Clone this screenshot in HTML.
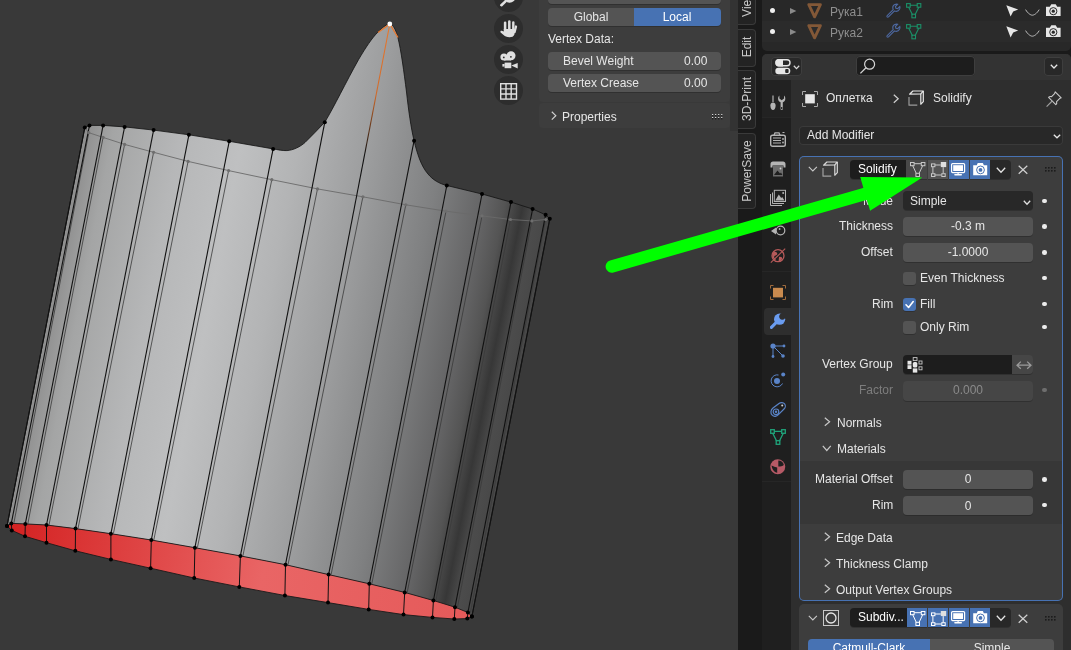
<!DOCTYPE html>
<html><head><meta charset="utf-8">
<style>
html,body{margin:0;padding:0;width:1071px;height:650px;overflow:hidden;background:#393939;position:relative}
.t{position:absolute;font-family:"Liberation Sans",sans-serif;font-size:12px;line-height:12px;white-space:nowrap;will-change:transform}
svg{overflow:visible}
</style></head><body>
<div style="position:absolute;left:0px;top:0px;width:738px;height:650px;background:#393939;border-radius:0px;"></div>
<svg style="position:absolute;left:0;top:0" width="738" height="650" viewBox="0 0 738 650">
<defs>
<linearGradient id="body" gradientUnits="userSpaceOnUse" x1="31.6" y1="400" x2="496.7" y2="491.2"><stop offset="0" stop-color="#8e8e8e"/><stop offset="0.06" stop-color="#a4a5a5"/><stop offset="0.2" stop-color="#b6b7b8"/><stop offset="0.33" stop-color="#bfc0c1"/><stop offset="0.45" stop-color="#b3b4b5"/><stop offset="0.6" stop-color="#9c9d9e"/><stop offset="0.75" stop-color="#7f8081"/><stop offset="0.86" stop-color="#636364"/><stop offset="0.9" stop-color="#545454"/><stop offset="0.938" stop-color="#373737"/><stop offset="0.965" stop-color="#4c4c4c"/><stop offset="1" stop-color="#474747"/></linearGradient>
<linearGradient id="red" gradientUnits="userSpaceOnUse" x1="10" y1="530" x2="470" y2="610"><stop offset="0" stop-color="#d42222"/><stop offset="0.55" stop-color="#e96565"/><stop offset="1" stop-color="#e55a5a"/></linearGradient>
<linearGradient id="sel" gradientUnits="userSpaceOnUse" x1="389.8" y1="24" x2="285.5" y2="564.7"><stop offset="0" stop-color="#e8782e"/><stop offset="0.13" stop-color="#d06a2a"/><stop offset="0.24" stop-color="#111"/></linearGradient>
</defs>
<path d="M84.8,127.5 L89.5,125.4 L103.1,125.4 L124.6,126.9 L153.6,130.1 L188.9,134.8 L229.2,141.3 L273.1,148.9 C278,149.8 283,150.8 287,150.6 C293,150.2 300,147 305,142.5 C312,136 318,129 324.8,122.2 C334,107 346,82 358.5,59.7 C366,47 372,38 378,32 C383,27 387,24 389.8,24 C393,24 396,30 398,38 C401,50 404,72 406.5,92 C408.5,110 411,128 414.1,140.7 C417,153 421,166 428,174 C433,180 439,183.5 446.8,185.5 L482,194 L511,202.1 L532.6,209 L545.6,214.8 L549.8,218.7 L471.9,616.5 L467.9,612.5 L455.0,607.2 L433.4,600.5 L404.7,592.4 L369.3,583.8 L328.6,574.6 L285.5,564.7 L240.4,555.9 L194.9,547.7 L151.3,540.0 L110.9,533.7 L75.5,528.6 L46.5,525.0 L25.3,523.9 L11.3,523.4 L7.0,526.1 Z" fill="url(#body)"/>
<polygon points="7.0,526.1 11.3,523.4 25.3,523.9 46.5,525.0 75.5,528.6 110.9,533.7 151.3,540.0 194.9,547.7 240.4,555.9 285.5,564.7 328.6,574.6 369.3,583.8 404.7,592.4 433.4,600.5 455.0,607.2 467.9,612.5 471.9,616.5 471.9,616.5 467.3,618.6 454.3,619.0 432.5,617.4 403.5,614.6 368.7,609.4 328.0,602.6 284.9,595.5 239.3,586.9 194.2,578.0 150.6,568.2 110.9,559.4 75.3,550.8 46.5,542.7 25.0,536.3 11.8,530.4 7.0,526.1" fill="url(#red)" stroke="#1a1a1a" stroke-width="0.9"/>
<polyline points="84.8,127.5 88.8,132.7 103.1,137.4 124.6,144.4 153.6,152.3 188.1,161.4 228.6,170.6 271.8,179.7 317.5,188.9 362.9,196.8 405.8,204.8 446.0,211.2 482.0,215.9 510.5,219.5 531.8,220.9 545.6,219.5 549.8,218.7" fill="none" stroke="#6a6a6a" stroke-width="0.9"/>
<line x1="88.8" y1="132.7" x2="13.8" y2="523.4" stroke="#3a3a3a" stroke-width="0.8"/>
<line x1="103.1" y1="137.4" x2="27.8" y2="523.9" stroke="#3a3a3a" stroke-width="0.8"/>
<line x1="124.6" y1="144.4" x2="49.0" y2="525" stroke="#3a3a3a" stroke-width="0.8"/>
<line x1="153.6" y1="152.3" x2="78.0" y2="528.6" stroke="#3a3a3a" stroke-width="0.8"/>
<line x1="188.1" y1="161.4" x2="113.4" y2="533.7" stroke="#3a3a3a" stroke-width="0.8"/>
<line x1="228.6" y1="170.6" x2="153.8" y2="540" stroke="#3a3a3a" stroke-width="0.8"/>
<line x1="271.8" y1="179.7" x2="197.4" y2="547.7" stroke="#3a3a3a" stroke-width="0.8"/>
<line x1="317.5" y1="188.9" x2="242.9" y2="555.9" stroke="#3a3a3a" stroke-width="0.8"/>
<line x1="362.9" y1="196.8" x2="288.0" y2="564.7" stroke="#3a3a3a" stroke-width="0.8"/>
<line x1="405.8" y1="204.8" x2="331.1" y2="574.6" stroke="#3a3a3a" stroke-width="0.8"/>
<line x1="446" y1="211.2" x2="371.8" y2="583.8" stroke="#3a3a3a" stroke-width="0.8"/>
<line x1="482" y1="215.9" x2="407.2" y2="592.4" stroke="#3a3a3a" stroke-width="0.8"/>
<line x1="510.5" y1="219.5" x2="435.9" y2="600.5" stroke="#3a3a3a" stroke-width="0.8"/>
<line x1="531.8" y1="220.9" x2="457.5" y2="607.2" stroke="#3a3a3a" stroke-width="0.8"/>
<line x1="545.6" y1="219.5" x2="470.4" y2="612.5" stroke="#3a3a3a" stroke-width="0.8"/>
<line x1="84.8" y1="127.5" x2="7" y2="526.1" stroke="#111" stroke-width="1.1"/>
<line x1="89.5" y1="125.4" x2="11.3" y2="523.4" stroke="#111" stroke-width="1.1"/>
<line x1="103.1" y1="125.4" x2="25.3" y2="523.9" stroke="#111" stroke-width="1.1"/>
<line x1="124.6" y1="126.9" x2="46.5" y2="525" stroke="#111" stroke-width="1.1"/>
<line x1="153.6" y1="130.1" x2="75.5" y2="528.6" stroke="#111" stroke-width="1.1"/>
<line x1="188.9" y1="134.8" x2="110.9" y2="533.7" stroke="#111" stroke-width="1.1"/>
<line x1="229.2" y1="141.3" x2="151.3" y2="540" stroke="#111" stroke-width="1.1"/>
<line x1="273.1" y1="148.9" x2="194.9" y2="547.7" stroke="#111" stroke-width="1.1"/>
<line x1="324.8" y1="122.2" x2="240.4" y2="555.9" stroke="#111" stroke-width="1.1"/>
<line x1="389.8" y1="24" x2="285.5" y2="564.7" stroke="url(#sel)" stroke-width="1.1"/>
<line x1="414.1" y1="140.7" x2="328.6" y2="574.6" stroke="#111" stroke-width="1.1"/>
<line x1="446.8" y1="185.5" x2="369.3" y2="583.8" stroke="#111" stroke-width="1.1"/>
<line x1="482" y1="194" x2="404.7" y2="592.4" stroke="#111" stroke-width="1.1"/>
<line x1="511" y1="202.1" x2="433.4" y2="600.5" stroke="#111" stroke-width="1.1"/>
<line x1="532.6" y1="209" x2="455" y2="607.2" stroke="#111" stroke-width="1.1"/>
<line x1="545.6" y1="214.8" x2="467.9" y2="612.5" stroke="#111" stroke-width="1.1"/>
<line x1="549.8" y1="218.7" x2="471.9" y2="616.5" stroke="#111" stroke-width="1.1"/>
<line x1="11.3" y1="523.4" x2="11.8" y2="530.4" stroke="#111" stroke-width="1"/>
<line x1="25.3" y1="523.9" x2="25" y2="536.3" stroke="#111" stroke-width="1"/>
<line x1="46.5" y1="525" x2="46.5" y2="542.7" stroke="#111" stroke-width="1"/>
<line x1="75.5" y1="528.6" x2="75.3" y2="550.8" stroke="#111" stroke-width="1"/>
<line x1="110.9" y1="533.7" x2="110.9" y2="559.4" stroke="#111" stroke-width="1"/>
<line x1="151.3" y1="540" x2="150.6" y2="568.2" stroke="#111" stroke-width="1"/>
<line x1="194.9" y1="547.7" x2="194.2" y2="578" stroke="#111" stroke-width="1"/>
<line x1="240.4" y1="555.9" x2="239.3" y2="586.9" stroke="#111" stroke-width="1"/>
<line x1="285.5" y1="564.7" x2="284.9" y2="595.5" stroke="#111" stroke-width="1"/>
<line x1="328.6" y1="574.6" x2="328" y2="602.6" stroke="#111" stroke-width="1"/>
<line x1="369.3" y1="583.8" x2="368.7" y2="609.4" stroke="#111" stroke-width="1"/>
<line x1="404.7" y1="592.4" x2="403.5" y2="614.6" stroke="#111" stroke-width="1"/>
<line x1="433.4" y1="600.5" x2="432.5" y2="617.4" stroke="#111" stroke-width="1"/>
<line x1="455" y1="607.2" x2="454.3" y2="619" stroke="#111" stroke-width="1"/>
<line x1="467.9" y1="612.5" x2="467.3" y2="618.6" stroke="#111" stroke-width="1"/>
<path d="M84.8,127.5 L89.5,125.4 L103.1,125.4 L124.6,126.9 L153.6,130.1 L188.9,134.8 L229.2,141.3 L273.1,148.9 C278,149.8 283,150.8 287,150.6 C293,150.2 300,147 305,142.5 C312,136 318,129 324.8,122.2 C334,107 346,82 358.5,59.7 C366,47 372,38 378,32 C383,27 387,24 389.8,24 C393,24 396,30 398,38 C401,50 404,72 406.5,92 C408.5,110 411,128 414.1,140.7 C417,153 421,166 428,174 C433,180 439,183.5 446.8,185.5 L482,194 L511,202.1 L532.6,209 L545.6,214.8 L549.8,218.7 L471.9,616.5 " fill="none" stroke="#111" stroke-width="0.8"/>
<path d="M84.8,127.5 L7,526.1" stroke="#111" stroke-width="1" fill="none"/>
<circle cx="84.8" cy="127.5" r="2" fill="#000"/>
<circle cx="89.5" cy="125.4" r="2" fill="#000"/>
<circle cx="103.1" cy="125.4" r="2" fill="#000"/>
<circle cx="124.6" cy="126.9" r="2" fill="#000"/>
<circle cx="153.6" cy="130.1" r="2" fill="#000"/>
<circle cx="188.9" cy="134.8" r="2" fill="#000"/>
<circle cx="229.2" cy="141.3" r="2" fill="#000"/>
<circle cx="273.1" cy="148.9" r="2" fill="#000"/>
<circle cx="324.8" cy="122.2" r="2" fill="#000"/>
<circle cx="414.1" cy="140.7" r="2" fill="#000"/>
<circle cx="446.8" cy="185.5" r="2" fill="#000"/>
<circle cx="482" cy="194" r="2" fill="#000"/>
<circle cx="511" cy="202.1" r="2" fill="#000"/>
<circle cx="532.6" cy="209" r="2" fill="#000"/>
<circle cx="545.6" cy="214.8" r="2" fill="#000"/>
<circle cx="549.8" cy="218.7" r="2" fill="#000"/>
<circle cx="7" cy="526.1" r="2" fill="#000"/>
<circle cx="11.3" cy="523.4" r="2" fill="#000"/>
<circle cx="25.3" cy="523.9" r="2" fill="#000"/>
<circle cx="46.5" cy="525" r="2" fill="#000"/>
<circle cx="75.5" cy="528.6" r="2" fill="#000"/>
<circle cx="110.9" cy="533.7" r="2" fill="#000"/>
<circle cx="151.3" cy="540" r="2" fill="#000"/>
<circle cx="194.9" cy="547.7" r="2" fill="#000"/>
<circle cx="240.4" cy="555.9" r="2" fill="#000"/>
<circle cx="285.5" cy="564.7" r="2" fill="#000"/>
<circle cx="328.6" cy="574.6" r="2" fill="#000"/>
<circle cx="369.3" cy="583.8" r="2" fill="#000"/>
<circle cx="404.7" cy="592.4" r="2" fill="#000"/>
<circle cx="433.4" cy="600.5" r="2" fill="#000"/>
<circle cx="455" cy="607.2" r="2" fill="#000"/>
<circle cx="467.9" cy="612.5" r="2" fill="#000"/>
<circle cx="471.9" cy="616.5" r="2" fill="#000"/>
<circle cx="7" cy="526.1" r="2" fill="#000"/>
<circle cx="11.8" cy="530.4" r="2" fill="#000"/>
<circle cx="25" cy="536.3" r="2" fill="#000"/>
<circle cx="46.5" cy="542.7" r="2" fill="#000"/>
<circle cx="75.3" cy="550.8" r="2" fill="#000"/>
<circle cx="110.9" cy="559.4" r="2" fill="#000"/>
<circle cx="150.6" cy="568.2" r="2" fill="#000"/>
<circle cx="194.2" cy="578" r="2" fill="#000"/>
<circle cx="239.3" cy="586.9" r="2" fill="#000"/>
<circle cx="284.9" cy="595.5" r="2" fill="#000"/>
<circle cx="328" cy="602.6" r="2" fill="#000"/>
<circle cx="368.7" cy="609.4" r="2" fill="#000"/>
<circle cx="403.5" cy="614.6" r="2" fill="#000"/>
<circle cx="432.5" cy="617.4" r="2" fill="#000"/>
<circle cx="454.3" cy="619" r="2" fill="#000"/>
<circle cx="467.3" cy="618.6" r="2" fill="#000"/>
<circle cx="471.9" cy="616.5" r="2" fill="#000"/>
<circle cx="88.8" cy="132.7" r="1.6" fill="#6e6e6e"/>
<circle cx="103.1" cy="137.4" r="1.6" fill="#6e6e6e"/>
<circle cx="124.6" cy="144.4" r="1.6" fill="#6e6e6e"/>
<circle cx="153.6" cy="152.3" r="1.6" fill="#6e6e6e"/>
<circle cx="188.1" cy="161.4" r="1.6" fill="#6e6e6e"/>
<circle cx="228.6" cy="170.6" r="1.6" fill="#6e6e6e"/>
<circle cx="271.8" cy="179.7" r="1.6" fill="#6e6e6e"/>
<circle cx="317.5" cy="188.9" r="1.6" fill="#6e6e6e"/>
<circle cx="362.9" cy="196.8" r="1.6" fill="#6e6e6e"/>
<circle cx="405.8" cy="204.8" r="1.6" fill="#6e6e6e"/>
<circle cx="446" cy="211.2" r="1.6" fill="#6e6e6e"/>
<circle cx="482" cy="215.9" r="1.6" fill="#6e6e6e"/>
<circle cx="510.5" cy="219.5" r="1.6" fill="#6e6e6e"/>
<circle cx="531.8" cy="220.9" r="1.6" fill="#6e6e6e"/>
<circle cx="545.6" cy="219.5" r="1.6" fill="#6e6e6e"/>
<path d="M378,32.5 L389.8,24 L398,37.5" fill="none" stroke="#e8782e" stroke-width="1.3"/>
<circle cx="389.8" cy="24" r="2.4" fill="#ffffff"/>
</svg><div style="position:absolute;left:493.5px;top:-17.2px;width:29px;height:29px;border-radius:50%;background:#2d2d2d"></div>
<div style="position:absolute;left:493.5px;top:14.0px;width:29px;height:29px;border-radius:50%;background:#2d2d2d"></div>
<div style="position:absolute;left:493.5px;top:45.2px;width:29px;height:29px;border-radius:50%;background:#2d2d2d"></div>
<div style="position:absolute;left:493.5px;top:76.4px;width:29px;height:29px;border-radius:50%;background:#2d2d2d"></div>
<svg style="position:absolute;left:496px;top:-12px;" width="24" height="20" viewBox="0 0 24 20"><circle cx="13.5" cy="8.6" r="6.2" fill="#e0e0e0"/><path d="M9.2 13.6 L5.4 17.2" stroke="#e0e0e0" stroke-width="2.6" stroke-linecap="round"/></svg>
<svg style="position:absolute;left:490px;top:15px;" width="36" height="30" viewBox="0 0 36 30"><g stroke="#e0e0e0" stroke-linecap="round" fill="none"><path d="M15.1 7.8 V15" stroke-width="2.5"/><path d="M19.3 6.4 V15" stroke-width="2.5"/><path d="M23.3 7.4 V15.5" stroke-width="2.4"/><path d="M26 11.5 L24.6 17" stroke-width="2.3"/></g><path d="M13.8 14 H25.2 L24.4 19.5 C23.6 21.6 21.8 22.2 19.6 22.2 C16.6 22.2 15 21.6 13 19.6 L10.6 17.4 C10 16.8 10.6 15.6 11.6 15.8 L13.8 16.6 Z" fill="#e0e0e0"/></svg>
<svg style="position:absolute;left:499.5px;top:50.5px;" width="18" height="18" viewBox="0 0 18 18"><circle cx="4" cy="6" r="3.6" fill="#e0e0e0"/><circle cx="11" cy="4.8" r="4.5" fill="#e0e0e0"/><rect x="4" y="5.5" width="7" height="4" fill="#e0e0e0"/><circle cx="3.8" cy="6.4" r="0.9" fill="#2f2f2f"/><circle cx="10.9" cy="5.8" r="0.9" fill="#2f2f2f"/><rect x="4.6" y="11.6" width="6.7" height="5.6" fill="#e0e0e0"/><rect x="2.4" y="13" width="2.2" height="2.6" fill="#e0e0e0"/><path d="M11.3 14.5 L17.7 12.1 V17.4 Z" fill="#e0e0e0"/></svg>
<svg style="position:absolute;left:499.6px;top:83.2px;" width="17.2" height="16.8" viewBox="0 0 17.2 16.8"><g fill="none" stroke="#e0e0e0" stroke-width="1.4"><rect x="0.7" y="0.7" width="15.8" height="15.4"/><path d="M6 0.7 V16.1 M11.2 0.7 V16.1 M0.7 5.9 H16.5 M0.7 11 H16.5"/></g></svg>
<div style="position:absolute;left:730px;top:0px;width:8px;height:131px;background:#333333;border-radius:0px;"></div>
<div style="position:absolute;left:539px;top:-10px;width:191px;height:111.5px;background:#3d3d3d;border-radius:4px;"></div>
<div style="position:absolute;left:548px;top:-10px;width:173px;height:13.8px;background:#545454;border-radius:4px;box-shadow:0 1px 0 rgba(0,0,0,0.2);"></div>
<div style="position:absolute;left:548px;top:8px;width:85.5px;height:18px;background:#545454;border-radius:4px 0 0 4px;box-shadow:0 1px 0 rgba(0,0,0,0.2);"></div>
<div style="position:absolute;left:633.5px;top:8px;width:87.5px;height:18px;background:#4772b3;border-radius:0 4px 4px 0;box-shadow:0 1px 0 rgba(0,0,0,0.2);"></div>
<div class="t" style="left:440.5px;width:300px;top:10.84px;color:#e6e6e6;font-size:12px;text-align:center;">Global</div>
<div class="t" style="left:527px;width:300px;top:10.84px;color:#ffffff;font-size:12px;text-align:center;">Local</div>
<div class="t" style="left:548px;top:32.84px;color:#e6e6e6;font-size:12px;">Vertex Data:</div>
<div style="position:absolute;left:548px;top:52.4px;width:173px;height:17.8px;background:#545454;border-radius:4px;box-shadow:0 1px 0 rgba(0,0,0,0.2);"></div>
<div class="t" style="left:563px;top:54.84px;color:#e6e6e6;font-size:12px;">Bevel Weight</div>
<div class="t" style="right:364px;top:54.84px;color:#e6e6e6;font-size:12px;text-align:right;">0.00</div>
<div style="position:absolute;left:548px;top:74.4px;width:173px;height:18px;background:#545454;border-radius:4px;box-shadow:0 1px 0 rgba(0,0,0,0.2);"></div>
<div class="t" style="left:563px;top:76.84px;color:#e6e6e6;font-size:12px;">Vertex Crease</div>
<div class="t" style="right:364px;top:76.84px;color:#e6e6e6;font-size:12px;text-align:right;">0.00</div>
<div style="position:absolute;left:539px;top:102.6px;width:191px;height:25.6px;background:#3d3d3d;border-radius:4px;"></div>
<svg style="position:absolute;left:550.5px;top:111.3px;" width="5.6" height="9.4" viewBox="0 0 5.6 9.4"><path d="M0.8 0.8 L4.8 4.7 L0.8 8.6" fill="none" stroke="#d0d0d0" stroke-width="1.2"/></svg>
<svg style="position:absolute;left:711.8px;top:114px;" width="12" height="6" viewBox="0 0 12 6"><rect x="0.0" y="0.0" width="1.2" height="1.2" fill="#d8d8d8"/><rect x="0.0" y="1.2" width="1.2" height="1.2" fill="#101010"/><rect x="0.0" y="2.9" width="1.2" height="1.2" fill="#d8d8d8"/><rect x="0.0" y="4.1" width="1.2" height="1.2" fill="#101010"/><rect x="3.05" y="0.0" width="1.2" height="1.2" fill="#d8d8d8"/><rect x="3.05" y="1.2" width="1.2" height="1.2" fill="#101010"/><rect x="3.05" y="2.9" width="1.2" height="1.2" fill="#d8d8d8"/><rect x="3.05" y="4.1" width="1.2" height="1.2" fill="#101010"/><rect x="6.1" y="0.0" width="1.2" height="1.2" fill="#d8d8d8"/><rect x="6.1" y="1.2" width="1.2" height="1.2" fill="#101010"/><rect x="6.1" y="2.9" width="1.2" height="1.2" fill="#d8d8d8"/><rect x="6.1" y="4.1" width="1.2" height="1.2" fill="#101010"/><rect x="9.149999999999999" y="0.0" width="1.2" height="1.2" fill="#d8d8d8"/><rect x="9.149999999999999" y="1.2" width="1.2" height="1.2" fill="#101010"/><rect x="9.149999999999999" y="2.9" width="1.2" height="1.2" fill="#d8d8d8"/><rect x="9.149999999999999" y="4.1" width="1.2" height="1.2" fill="#101010"/></svg>
<div class="t" style="left:561.6px;top:110.84px;color:#e6e6e6;font-size:12px;">Properties</div>
<div style="position:absolute;left:738px;top:0px;width:24px;height:650px;background:#1a1a1a;border-radius:0px;"></div>
<div style="position:absolute;left:738px;top:-30px;width:17px;height:53.2px;background:#232323;border:1px solid #3a3a3a;border-left:none;border-radius:0 4px 4px 0"></div>
<div class="t" style="left:707.1px;top:-2.0px;width:80px;text-align:center;color:#c8c8c8;transform:rotate(-90deg)">View</div>
<div style="position:absolute;left:738px;top:29.3px;width:17px;height:35.8px;background:#232323;border:1px solid #3a3a3a;border-left:none;border-radius:0 4px 4px 0"></div>
<div class="t" style="left:707.1px;top:40.85px;width:80px;text-align:center;color:#c8c8c8;transform:rotate(-90deg)">Edit</div>
<div style="position:absolute;left:738px;top:70.2px;width:17px;height:56.7px;background:#232323;border:1px solid #3a3a3a;border-left:none;border-radius:0 4px 4px 0"></div>
<div class="t" style="left:707.1px;top:93.1px;width:80px;text-align:center;color:#c8c8c8;transform:rotate(-90deg)">3D-Print</div>
<div style="position:absolute;left:738px;top:133.3px;width:17px;height:73.79999999999998px;background:#232323;border:1px solid #3a3a3a;border-left:none;border-radius:0 4px 4px 0"></div>
<div class="t" style="left:707.1px;top:165px;width:80px;text-align:center;color:#c8c8c8;transform:rotate(-90deg)">PowerSave</div>
<div style="position:absolute;left:756px;top:0px;width:315px;height:650px;background:#1a1a1a;border-radius:0px;"></div>
<div style="position:absolute;left:762px;top:-10px;width:309px;height:60.6px;background:#282828;border-radius:0 0 5px 5px;"></div>
<div style="position:absolute;left:762px;top:21.2px;width:309px;height:20.9px;background:#2b2b2b;border-radius:0px;"></div>
<div style="position:absolute;left:769.8px;top:7.700000000000001px;width:5.2px;height:5.2px;border-radius:50%;background:#f0f0f0"></div>
<svg style="position:absolute;left:789.9px;top:7.9px;" width="7" height="6" viewBox="0 0 7 6"><path d="M0 0 L6.4 3 L0 6 Z" fill="#8a8a8a"/></svg>
<svg style="position:absolute;left:806.9px;top:2.7px;" width="15.2" height="15.5" viewBox="0 0 15.2 15.5"><path d="M1.8 1.6 H13.4 L7.6 13.8 Z" fill="none" stroke="#835837" stroke-width="2.9" stroke-linejoin="round"/></svg>
<svg style="position:absolute;left:884.6px;top:2.5px;" width="16" height="16" viewBox="0 0 16 16"><path d="M2.2 12.6 L8.2 6.6 C7.4 4.6 8 2.6 9.8 1.6 C10.8 1.1 11.8 1 12.6 1.3 L10.4 3.5 L10.9 5.2 L12.6 5.7 L14.8 3.5 C15.1 4.4 15 5.4 14.5 6.3 C13.5 8.1 11.5 8.7 9.5 7.9 L3.5 13.9 C3.1 14.3 2.5 14.3 2.1 13.9 L2.1 13.9 C1.8 13.5 1.8 13 2.2 12.6 Z" fill="none" stroke="#4d68a0" stroke-width="1.1"/></svg>
<svg style="position:absolute;left:905.9px;top:2.9px;" width="15.5" height="15.5" viewBox="0 0 15.5 15.5"><g fill="none" stroke="#1b9068" stroke-width="1.1"><path d="M4 2.3 H11.5 M2.6 4 L6.6 12 M12.9 4 L8.9 12"/><rect x="0.6" y="0.6" width="3.6" height="3.6"/><rect x="11.2" y="0.6" width="3.6" height="3.6"/><rect x="5.9" y="11.2" width="3.6" height="3.6"/></g></svg>
<svg style="position:absolute;left:1005.6px;top:5px;" width="13" height="12" viewBox="0 0 13 12"><path d="M0.3 0.3 L12.2 4.5 L7.2 6.4 L4.6 11.6 Z" fill="#e6e6e6"/></svg>
<svg style="position:absolute;left:1024.8px;top:8.8px;" width="15" height="7" viewBox="0 0 15 7"><path d="M0.6 0.6 C3 4.8 6 6.2 7.3 6.2 C8.8 6.2 11.8 4.8 14.2 0.6" fill="none" stroke="#bdbdbd" stroke-width="1"/></svg>
<svg style="position:absolute;left:1045.8px;top:4.1px;" width="15" height="12" viewBox="0 0 15 12"><path d="M0 2.8 H3.8 L5.3 0.2 H9.7 L11.2 2.8 H14.6 V11.9 H0 Z" fill="#e6e6e6"/><circle cx="7.3" cy="7.2" r="3.6" fill="none" stroke="#282828" stroke-width="1"/><circle cx="7.3" cy="7.2" r="1.6" fill="#282828"/></svg>
<div style="position:absolute;left:769.8px;top:28.599999999999998px;width:5.2px;height:5.2px;border-radius:50%;background:#f0f0f0"></div>
<svg style="position:absolute;left:789.9px;top:28.799999999999997px;" width="7" height="6" viewBox="0 0 7 6"><path d="M0 0 L6.4 3 L0 6 Z" fill="#8a8a8a"/></svg>
<svg style="position:absolute;left:806.9px;top:23.599999999999998px;" width="15.2" height="15.5" viewBox="0 0 15.2 15.5"><path d="M1.8 1.6 H13.4 L7.6 13.8 Z" fill="none" stroke="#835837" stroke-width="2.9" stroke-linejoin="round"/></svg>
<svg style="position:absolute;left:884.6px;top:23.4px;" width="16" height="16" viewBox="0 0 16 16"><path d="M2.2 12.6 L8.2 6.6 C7.4 4.6 8 2.6 9.8 1.6 C10.8 1.1 11.8 1 12.6 1.3 L10.4 3.5 L10.9 5.2 L12.6 5.7 L14.8 3.5 C15.1 4.4 15 5.4 14.5 6.3 C13.5 8.1 11.5 8.7 9.5 7.9 L3.5 13.9 C3.1 14.3 2.5 14.3 2.1 13.9 L2.1 13.9 C1.8 13.5 1.8 13 2.2 12.6 Z" fill="none" stroke="#4d68a0" stroke-width="1.1"/></svg>
<svg style="position:absolute;left:905.9px;top:23.799999999999997px;" width="15.5" height="15.5" viewBox="0 0 15.5 15.5"><g fill="none" stroke="#1b9068" stroke-width="1.1"><path d="M4 2.3 H11.5 M2.6 4 L6.6 12 M12.9 4 L8.9 12"/><rect x="0.6" y="0.6" width="3.6" height="3.6"/><rect x="11.2" y="0.6" width="3.6" height="3.6"/><rect x="5.9" y="11.2" width="3.6" height="3.6"/></g></svg>
<svg style="position:absolute;left:1005.6px;top:25.9px;" width="13" height="12" viewBox="0 0 13 12"><path d="M0.3 0.3 L12.2 4.5 L7.2 6.4 L4.6 11.6 Z" fill="#e6e6e6"/></svg>
<svg style="position:absolute;left:1024.8px;top:29.7px;" width="15" height="7" viewBox="0 0 15 7"><path d="M0.6 0.6 C3 4.8 6 6.2 7.3 6.2 C8.8 6.2 11.8 4.8 14.2 0.6" fill="none" stroke="#bdbdbd" stroke-width="1"/></svg>
<svg style="position:absolute;left:1045.8px;top:25.0px;" width="15" height="12" viewBox="0 0 15 12"><path d="M0 2.8 H3.8 L5.3 0.2 H9.7 L11.2 2.8 H14.6 V11.9 H0 Z" fill="#e6e6e6"/><circle cx="7.3" cy="7.2" r="3.6" fill="none" stroke="#282828" stroke-width="1"/><circle cx="7.3" cy="7.2" r="1.6" fill="#282828"/></svg>
<div class="t" style="left:829.6px;top:5.74px;color:#8e8e8e;font-size:12px;">Рука1</div>
<div class="t" style="left:829.6px;top:26.84px;color:#8e8e8e;font-size:12px;">Рука2</div>
<div style="position:absolute;left:762px;top:54px;width:309px;height:600px;background:#2e2e2e;border-radius:5px 5px 0 0;"></div>
<div style="position:absolute;left:762px;top:54px;width:309px;height:26px;background:#333333;border-radius:5px 5px 0 0;"></div>
<div style="position:absolute;left:762px;top:80px;width:29px;height:570px;background:#1f1f1f;border-radius:0px;"></div>
<div style="position:absolute;left:771.1px;top:56.7px;width:31.2px;height:19.3px;background:#282828;border-radius:4px;box-shadow:inset 0 0 0 1px #3e3e3e;"></div>
<svg style="position:absolute;left:774.5px;top:58.8px;" width="16" height="16" viewBox="0 0 16 16"><rect x="1" y="0.7" width="14" height="6" rx="3" fill="#282828" stroke="#e6e6e6" stroke-width="1.4"/><path d="M4 0 H8 V7.4 H4 A3.7 3.7 0 0 1 4 0 Z" fill="#e6e6e6"/><rect x="0.3" y="8.7" width="15" height="6.6" rx="3.3" fill="#e6e6e6"/><rect x="10.2" y="10" width="3.4" height="4" rx="1" fill="#282828"/></svg>
<svg style="position:absolute;left:792.6px;top:64.9px;" width="7" height="4.4" viewBox="0 0 7 4.4"><path d="M0.8 0.8 L3.5 3.6000000000000005 L6.2 0.8" fill="none" stroke="#d8d8d8" stroke-width="1.3"/></svg>
<div style="position:absolute;left:855.8px;top:56.4px;width:119.3px;height:19.9px;background:#1d1d1d;border-radius:4px;box-shadow:inset 0 0 0 1px #3e3e3e;"></div>
<svg style="position:absolute;left:859px;top:58px;" width="17" height="17" viewBox="0 0 17 17"><circle cx="10.6" cy="6.2" r="5" fill="none" stroke="#d6d6d6" stroke-width="1.2"/><path d="M7 9.8 L1.4 15.4" stroke="#d6d6d6" stroke-width="1.3"/></svg>
<div style="position:absolute;left:1043.8px;top:56.5px;width:19.4px;height:19.7px;background:#282828;border-radius:4px;box-shadow:inset 0 0 0 1px #3e3e3e;"></div>
<svg style="position:absolute;left:1049.5px;top:64.3px;" width="8" height="4.8" viewBox="0 0 8 4.8"><path d="M0.8 0.8 L4.0 4.0 L7.2 0.8" fill="none" stroke="#e6e6e6" stroke-width="1.3"/></svg>
<div style="position:absolute;left:762px;top:80px;width:29px;height:37px;background:#222222;border-radius:0px;"></div>
<div style="position:absolute;left:762px;top:117px;width:29px;height:1px;background:#262626;border-radius:0px;"></div>
<div style="position:absolute;left:762px;top:270.6px;width:29px;height:1px;background:#262626;border-radius:0px;"></div>
<div style="position:absolute;left:762px;top:481.2px;width:29px;height:1px;background:#262626;border-radius:0px;"></div>
<svg style="position:absolute;left:769.5px;top:94.5px;" width="16" height="16" viewBox="0 0 16 16"><path d="M3 0.5 V7" stroke="#b4b4b4" stroke-width="1.2"/><path d="M0.4 10.5 C0.4 8.3 1.6 7.5 3 7.5 C4.4 7.5 5.6 8.3 5.6 10.5 C5.6 13 4.6 15 3 15 C1.4 15 0.4 13 0.4 10.5 Z" fill="#b4b4b4"/><path d="M9.4 0.6 V3.6 L11.7 5.2 L14 3.6 V0.6 C15.3 1.6 15.6 3.4 15.1 4.9 C14.6 6.2 13.6 7 12.8 7.2 V14.2 C12.8 15.1 10.6 15.1 10.6 14.2 V7.2 C9.8 7 8.8 6.2 8.3 4.9 C7.8 3.4 8.1 1.6 9.4 0.6 Z" fill="#b4b4b4"/><rect x="11.1" y="12" width="1.2" height="2.2" fill="#1f1f1f"/></svg>
<svg style="position:absolute;left:769.6px;top:131.5px;" width="16" height="15" viewBox="0 0 16 15"><rect x="0.7" y="3.2" width="14.6" height="11" rx="1.8" fill="none" stroke="#b4b4b4" stroke-width="1.4"/><path d="M4 3.2 L5 0.8 H9 L10 3.2" fill="none" stroke="#b4b4b4" stroke-width="1.3"/><rect x="12.5" y="0" width="2" height="1" fill="#b4b4b4"/><path d="M3 6 H11 M3 8.5 H11 M3 11 H11" stroke="#b4b4b4" stroke-width="1"/><circle cx="13" cy="7" r="0.9" fill="#b4b4b4"/><circle cx="13" cy="10.5" r="0.9" fill="#b4b4b4"/></svg>
<svg style="position:absolute;left:769.6px;top:160.8px;" width="16" height="16" viewBox="0 0 16 16"><path d="M0.5 6.5 V3 C0.5 1.5 1.5 0.5 3 0.5 H13 C14.5 0.5 15.5 1.5 15.5 3 V6.5 H13.5 V4.6 H2.5 V6.5 Z" fill="#b4b4b4"/><rect x="3" y="5" width="10" height="10.5" fill="#6c6c6c"/><path d="M4 14 L7.5 9.5 L10 12.5 L11 11.5 L12.4 14 Z" fill="#1f1f1f"/><circle cx="10.5" cy="7.5" r="0.9" fill="#d0d0d0"/></svg>
<svg style="position:absolute;left:769.8px;top:189.8px;" width="16" height="16" viewBox="0 0 16 16"><g fill="none" stroke="#b4b4b4" stroke-width="1"><path d="M0.5 4 V15.5 H12"/><path d="M2.5 2.5 V13.5 H14"/></g><rect x="4.3" y="0.3" width="11.2" height="11.2" fill="none" stroke="#b4b4b4" stroke-width="1"/><path d="M5.3 10.5 L8.8 4.5 L11.2 8 L12.2 7 L14.5 10.5 Z" fill="#b4b4b4"/><circle cx="13.2" cy="3" r="1" fill="#b4b4b4"/></svg>
<svg style="position:absolute;left:769.8px;top:219.5px;" width="16" height="16" viewBox="0 0 16 16"><path d="M1 11 L6 7.5 V14.5 Z" fill="#b4b4b4"/><circle cx="10.5" cy="10.5" r="4.3" fill="none" stroke="#b4b4b4" stroke-width="1.2"/><circle cx="9.6" cy="9" r="0.9" fill="#b4b4b4"/></svg>
<svg style="position:absolute;left:769.8px;top:248.3px;" width="16" height="15" viewBox="0 0 16 15"><circle cx="8" cy="7.7" r="6" fill="none" stroke="#b85a5a" stroke-width="1.3"/><path d="M4 3.8 C6 3.6 7.8 4.6 7.2 6.4 C6.6 7.6 4.8 7 4.2 8.4 C3.8 9.6 5.4 10.6 6.2 12.6 C4 12 2.6 10 2.4 8 C2.4 6 3 4.6 4 3.8 Z M9 9 C10.6 8.4 12.6 9.2 12.2 10.8 C11.6 12.4 10 13.4 8.6 13.6 Z" fill="#b85a5a"/><path d="M0.8 14.6 L15.2 0.6" stroke="#b85a5a" stroke-width="1.1"/></svg>
<svg style="position:absolute;left:769.6px;top:285px;" width="16" height="15" viewBox="0 0 16 15"><g fill="none" stroke="#a06b3c" stroke-width="1"><path d="M0.5 3.5 V0.5 H3.5 M12.5 0.5 H15.5 V3.5 M15.5 11.5 V14.5 H12.5 M3.5 14.5 H0.5 V11.5"/></g><rect x="3" y="2.8" width="10" height="9.6" fill="#c98a4e"/></svg>
<div style="position:absolute;left:764px;top:308.1px;width:27px;height:27px;background:#2e2e2e;border-radius:4px 0 0 4px;"></div>
<svg style="position:absolute;left:768px;top:311px;" width="20" height="20" viewBox="0 0 20 20"><defs><mask id="wm"><rect x="0" y="0" width="20" height="20" fill="#fff"/><circle cx="14.3" cy="5.6" r="3.1" fill="#000"/><path d="M14.3 2.5 L19 -1 L21 5 L17.4 5.6 Z" fill="#000"/></mask></defs><g mask="url(#wm)"><circle cx="11.6" cy="8.2" r="5.6" fill="#6a9cf0"/><path d="M3.4 16.3 L9.6 10.1" stroke="#6a9cf0" stroke-width="3.1" stroke-linecap="round"/></g></svg>
<svg style="position:absolute;left:769.6px;top:342.5px;" width="16" height="16" viewBox="0 0 16 16"><g stroke="#5a84c8" stroke-width="1"><path d="M3 3 H14 M3 3 V14 M3 3 L13 13"/></g><circle cx="3" cy="3" r="2.6" fill="#5a84c8"/><circle cx="14" cy="3" r="1.4" fill="#5a84c8"/><circle cx="3" cy="13.5" r="1.4" fill="#5a84c8"/><circle cx="13" cy="13" r="1.8" fill="#5a84c8"/></svg>
<svg style="position:absolute;left:769.6px;top:372px;" width="16" height="16" viewBox="0 0 16 16"><path d="M12.5 11.5 A6 6 0 1 1 8.5 3" fill="none" stroke="#5a84c8" stroke-width="1"/><circle cx="7" cy="9" r="3" fill="#5a84c8"/><circle cx="13.2" cy="2.6" r="2" fill="#5a84c8"/></svg>
<svg style="position:absolute;left:769.6px;top:401.5px;" width="16" height="16" viewBox="0 0 16 16"><path d="M2.2 13.2 C0.2 11.2 0.6 8 3 6 L9 1.4 C10.6 0.2 13.4 0.4 14.6 1.8 C15.8 3.4 15.4 5.8 14 7 L8.4 12.6 C6.6 14.6 4 15 2.2 13.2 Z" fill="none" stroke="#5a84c8" stroke-width="1.2"/><circle cx="6" cy="9.8" r="2.8" fill="none" stroke="#5a84c8" stroke-width="1.2"/><circle cx="6" cy="9.8" r="1.2" fill="#5a84c8"/><circle cx="12.2" cy="3.6" r="1" fill="#d0d0d0"/></svg>
<svg style="position:absolute;left:769.6px;top:429.2px;" width="16" height="16" viewBox="0 0 16 16"><g fill="none" stroke="#1fa37a" stroke-width="1.3"><path d="M4 2.3 H12 M2.6 4 L6.6 12 M13.4 4 L9.4 12"/><rect x="0.7" y="0.7" width="3.6" height="3.6"/><rect x="11.7" y="0.7" width="3.6" height="3.6"/><rect x="6.2" y="11.7" width="3.6" height="3.6"/></g></svg>
<svg style="position:absolute;left:769.8px;top:458.8px;" width="16" height="16" viewBox="0 0 16 16"><circle cx="7.75" cy="7.7" r="7.5" fill="#b65a66"/><path d="M8.3 1.6 V7.6 C10.5 7.6 12.6 7 13.8 6 C13.5 3.6 11.2 1.6 8.3 1.6 Z" fill="#1f1f1f"/><path d="M7.2 13.8 V8.4 C5.2 8.2 3.4 7.6 1.6 6.6 C1.8 10.3 4.2 13.3 7.2 13.8 Z" fill="#1f1f1f"/></svg>
<svg style="position:absolute;left:801.7px;top:90.7px;" width="16" height="16" viewBox="0 0 16 16"><g fill="none" stroke="#a8a8a8" stroke-width="1"><path d="M0.5 4 V0.5 H4 M12 0.5 H15.5 V4 M15.5 12 V15.5 H12 M4 15.5 H0.5 V12"/></g><rect x="3.2" y="3.2" width="9.6" height="9.2" fill="#e6e6e6"/></svg>
<div class="t" style="left:826.4px;top:92.24000000000001px;color:#e6e6e6;font-size:12px;">Оплетка</div>
<svg style="position:absolute;left:893px;top:93.5px;" width="6" height="9.5" viewBox="0 0 6 9.5"><path d="M0.8 0.8 L5.2 4.75 L0.8 8.7" fill="none" stroke="#d0d0d0" stroke-width="1.2"/></svg>
<svg style="position:absolute;left:908.4px;top:90.2px;" width="17" height="17" viewBox="0 0 17 17"><g transform="translate(1,1)" fill="none" stroke-width="1.2" stroke-linejoin="round"><path d="M0.6 3.2 L3.9 0 H14.3 L11.8 2.8 Z" stroke="#e6e6e6"/><path d="M11.8 2.8 V13.6 M14.3 0 V10.7 L11.5 13.6" stroke="#e6e6e6"/><path d="M0 5.9 V14.2 H8.3" stroke="#9a9a9a"/></g></svg>
<div class="t" style="left:933.1px;top:92.24000000000001px;color:#e6e6e6;font-size:12px;">Solidify</div>
<svg style="position:absolute;left:1046px;top:90.5px;" width="16" height="16" viewBox="0 0 16 16"><path d="M9.2 0.8 L15.2 6.8 L13.6 7.6 L10.6 10.6 C11 12 10.6 13 9.8 13.6 L2.6 6.4 C3.2 5.6 4.2 5.2 5.6 5.6 L8.6 2.6 Z" fill="none" stroke="#c8c8c8" stroke-width="1.1" stroke-linejoin="round"/><path d="M6.2 10 L0.6 15.6" stroke="#a0a0a0" stroke-width="1.1"/></svg>
<div style="position:absolute;left:799.4px;top:125.6px;width:264px;height:19.8px;background:#282828;border-radius:4px;box-shadow:inset 0 0 0 1px #3a3a3a;"></div>
<div class="t" style="left:807.4px;top:128.74px;color:#e6e6e6;font-size:12px;">Add Modifier</div>
<svg style="position:absolute;left:1052.5px;top:134px;" width="8" height="4.6" viewBox="0 0 8 4.6"><path d="M0.8 0.8 L4.0 3.8 L7.2 0.8" fill="none" stroke="#e6e6e6" stroke-width="1.3"/></svg>
<div style="position:absolute;left:799.4px;top:156.3px;width:263.4px;height:445.2px;background:#3d3d3d;border-radius:5px;box-shadow:inset 0 0 0 1px #4772b3;"></div>
<svg style="position:absolute;left:807.5px;top:166px;" width="9.7" height="5.7" viewBox="0 0 9.7 5.7"><path d="M0.8 0.8 L4.85 4.9 L8.899999999999999 0.8" fill="none" stroke="#c8c8c8" stroke-width="1.1"/></svg>
<svg style="position:absolute;left:822.2px;top:161.2px;" width="17" height="17" viewBox="0 0 17 17"><g transform="translate(1,1)" fill="none" stroke-width="1.2" stroke-linejoin="round"><path d="M0.6 3.2 L3.9 0 H14.3 L11.8 2.8 Z" stroke="#d8d8d8"/><path d="M11.8 2.8 V13.6 M14.3 0 V10.7 L11.5 13.6" stroke="#d8d8d8"/><path d="M0 5.9 V14.2 H8.3" stroke="#a0a0a0"/></g></svg>
<div style="position:absolute;left:850.3px;top:159.9px;width:55.8px;height:18.9px;background:#1d1d1d;border-radius:4px 0 0 4px;box-shadow:0 1px 0 rgba(0,0,0,0.2);"></div>
<div class="t" style="left:857.6px;top:162.84px;color:#ffffff;font-size:12px;">Solidify</div>
<div style="position:absolute;left:906.1px;top:159.9px;width:21px;height:18.9px;background:#484848;border-radius:0px;box-shadow:0 1px 0 rgba(0,0,0,0.2);"></div>
<div style="position:absolute;left:928px;top:159.9px;width:20.1px;height:18.9px;background:#545454;border-radius:0px;box-shadow:0 1px 0 rgba(0,0,0,0.2);"></div>
<div style="position:absolute;left:949px;top:159.9px;width:19.9px;height:18.9px;background:#4772b3;border-radius:0px;box-shadow:0 1px 0 rgba(0,0,0,0.2);"></div>
<div style="position:absolute;left:970px;top:159.9px;width:19.9px;height:18.9px;background:#4772b3;border-radius:0px;box-shadow:0 1px 0 rgba(0,0,0,0.2);"></div>
<div style="position:absolute;left:990px;top:159.9px;width:21px;height:18.9px;background:#282828;border-radius:0 4px 4px 0;box-shadow:0 1px 0 rgba(0,0,0,0.2);"></div>
<svg style="position:absolute;left:909.8px;top:162px;" width="16" height="15" viewBox="0 0 16 15"><g fill="none" stroke="#c8c8c8" stroke-width="1"><path d="M4.2 1.7 H11.2 M2.7 3.6 L6.2 11.2 M12.7 3.6 L9.2 11.2"/><rect x="0.5" y="0.5" width="3.6" height="3.2"/><rect x="11.3" y="0.5" width="3.6" height="3.2"/><rect x="5.9" y="11.3" width="3.6" height="3.2"/></g></svg>
<svg style="position:absolute;left:930.8px;top:162px;" width="16" height="15" viewBox="0 0 16 15"><g fill="none" stroke="#c8c8c8" stroke-width="1"><path d="M4 3 H9.8 M1.9 4.7 V11.2 M4 13 H10.3 M12.2 5.1 V11.2"/><rect x="0.5" y="1.9" width="3.4" height="2.8"/><rect x="0.5" y="11.7" width="3.4" height="2.8"/><rect x="10.8" y="11.7" width="3.4" height="2.8"/></g><rect x="9.8" y="0" width="5.4" height="5.1" fill="#e0e0e0"/></svg>
<svg style="position:absolute;left:951.2px;top:163.3px;" width="15" height="13" viewBox="0 0 15 13"><rect x="0.6" y="0.6" width="13" height="9" rx="1" fill="#4772b3" stroke="#ffffff" stroke-width="1.2"/><rect x="2.2" y="2.2" width="9.8" height="5.8" fill="#ffffff"/><path d="M7.1 9.6 V11.2" stroke="#ffffff" stroke-width="1.2"/><rect x="3.2" y="11.1" width="7.8" height="1.4" rx="0.7" fill="#ffffff"/></svg>
<svg style="position:absolute;left:972.8px;top:162.7px;" width="15" height="13" viewBox="0 0 15 13"><path d="M0.2 2.2 H3.8 L4.6 0.3 C4.8 0 5 0 5.3 0 H9.3 C9.6 0 9.8 0 10 0.3 L10.8 2.2 H14.2 V12.3 H0.2 Z" fill="#ffffff"/><circle cx="7.5" cy="6.9" r="3.9" fill="none" stroke="#4772b3" stroke-width="1"/><circle cx="7.5" cy="6.9" r="1.9" fill="#4772b3"/></svg>
<svg style="position:absolute;left:995.5px;top:166.5px;" width="10" height="6" viewBox="0 0 10 6"><path d="M0.8 0.8 L5.0 5.2 L9.2 0.8" fill="none" stroke="#e6e6e6" stroke-width="1.3"/></svg>
<svg style="position:absolute;left:1017.8px;top:165.2px;" width="10" height="9.5" viewBox="0 0 10 9.5"><path d="M0.7 0.7 L9.3 8.8 M9.3 0.7 L0.7 8.8" stroke="#d0d0d0" stroke-width="1.2"/></svg>
<svg style="position:absolute;left:1044.5px;top:167.2px;" width="11" height="5" viewBox="0 0 11 5"><rect x="0" y="0" width="1.6" height="1.6" fill="#1c1c1c"/><rect x="0" y="3" width="1.6" height="1.6" fill="#1c1c1c"/><rect x="3" y="0" width="1.6" height="1.6" fill="#1c1c1c"/><rect x="3" y="3" width="1.6" height="1.6" fill="#1c1c1c"/><rect x="6" y="0" width="1.6" height="1.6" fill="#1c1c1c"/><rect x="6" y="3" width="1.6" height="1.6" fill="#1c1c1c"/><rect x="9" y="0" width="1.6" height="1.6" fill="#1c1c1c"/><rect x="9" y="3" width="1.6" height="1.6" fill="#1c1c1c"/></svg>
<div class="t" style="right:178px;top:194.84px;color:#e6e6e6;font-size:12px;text-align:right;">Mode</div>
<div style="position:absolute;left:903px;top:191.2px;width:129.8px;height:18.7px;background:#282828;border-radius:4px;box-shadow:0 1px 0 rgba(0,0,0,0.2);"></div>
<div class="t" style="left:910.4px;top:194.84px;color:#e6e6e6;font-size:12px;">Simple</div>
<svg style="position:absolute;left:1023px;top:199.5px;" width="8" height="5" viewBox="0 0 8 5"><path d="M0.8 0.8 L4.0 4.2 L7.2 0.8" fill="none" stroke="#e0e0e0" stroke-width="1.3"/></svg>
<div style="position:absolute;left:1042.2px;top:198.5px;width:4.6px;height:4.6px;border-radius:50%;background:#ececec"></div>
<div class="t" style="right:178px;top:219.64000000000001px;color:#e6e6e6;font-size:12px;text-align:right;">Thickness</div>
<div style="position:absolute;left:903px;top:217.1px;width:129.8px;height:19.1px;background:#545454;border-radius:4px;box-shadow:0 1px 0 rgba(0,0,0,0.2);"></div>
<div class="t" style="left:817.9px;width:300px;top:220.34px;color:#e6e6e6;font-size:12px;text-align:center;">-0.3 m</div>
<div style="position:absolute;left:1042.2px;top:224.0px;width:4.6px;height:4.6px;border-radius:50%;background:#ececec"></div>
<div class="t" style="right:178px;top:245.84px;color:#e6e6e6;font-size:12px;text-align:right;">Offset</div>
<div style="position:absolute;left:903px;top:243.2px;width:129.8px;height:18.9px;background:#545454;border-radius:4px;box-shadow:0 1px 0 rgba(0,0,0,0.2);"></div>
<div class="t" style="left:817.9px;width:300px;top:246.34px;color:#e6e6e6;font-size:12px;text-align:center;">-1.0000</div>
<div style="position:absolute;left:1042.2px;top:250.0px;width:4.6px;height:4.6px;border-radius:50%;background:#ececec"></div>
<div style="position:absolute;left:903px;top:272.3px;width:13px;height:13px;background:#545454;border-radius:3px;box-shadow:0 1px 0 rgba(0,0,0,0.2);"></div>
<div class="t" style="left:920.4px;top:271.84px;color:#e6e6e6;font-size:12px;">Even Thickness</div>
<div style="position:absolute;left:1042.2px;top:275.8px;width:4.6px;height:4.6px;border-radius:50%;background:#ececec"></div>
<div class="t" style="right:178px;top:297.64px;color:#e6e6e6;font-size:12px;text-align:right;">Rim</div>
<div style="position:absolute;left:903px;top:297.8px;width:13px;height:13.2px;background:#4772b3;border-radius:3px;box-shadow:0 1px 0 rgba(0,0,0,0.2);"></div>
<svg style="position:absolute;left:903px;top:297.8px;" width="13" height="13" viewBox="0 0 13 13"><path d="M3 6.8 L5.6 9.5 L10.2 3.6" fill="none" stroke="#ffffff" stroke-width="1.6" stroke-linecap="round" stroke-linejoin="round"/></svg>
<div class="t" style="left:920.4px;top:297.64px;color:#e6e6e6;font-size:12px;">Fill</div>
<div style="position:absolute;left:1042.2px;top:301.8px;width:4.6px;height:4.6px;border-radius:50%;background:#ececec"></div>
<div style="position:absolute;left:903px;top:321.1px;width:13px;height:13.2px;background:#545454;border-radius:3px;box-shadow:0 1px 0 rgba(0,0,0,0.2);"></div>
<div class="t" style="left:920.4px;top:320.84px;color:#e6e6e6;font-size:12px;">Only Rim</div>
<div style="position:absolute;left:1042.2px;top:324.9px;width:4.6px;height:4.6px;border-radius:50%;background:#ececec"></div>
<div class="t" style="right:178px;top:358.14px;color:#e6e6e6;font-size:12px;text-align:right;">Vertex Group</div>
<div style="position:absolute;left:903px;top:355.2px;width:109px;height:18.5px;background:#1d1d1d;border-radius:4px 0 0 4px;box-shadow:0 1px 0 rgba(0,0,0,0.2);"></div>
<div style="position:absolute;left:1011.7px;top:355.2px;width:21px;height:18.4px;background:#464646;border-radius:0 4px 4px 0;box-shadow:0 1px 0 rgba(0,0,0,0.2);"></div>
<svg style="position:absolute;left:906.5px;top:356.5px;" width="18" height="17" viewBox="0 0 18 17"><g fill="#e6e6e6"><rect x="0.5" y="3.8" width="4" height="3.8"/><rect x="0.5" y="8.2" width="4" height="3.8"/><rect x="5.8" y="11.4" width="4.5" height="4.2"/><rect x="5.8" y="5" width="4.5" height="5.6" rx="1.5"/></g><g fill="none" stroke="#c8c8c8" stroke-width="0.9"><rect x="6.2" y="0.6" width="3.8" height="3"/><rect x="12" y="4" width="3" height="3"/><rect x="12" y="9.8" width="3" height="3"/></g></svg>
<svg style="position:absolute;left:1015.5px;top:360.5px;" width="16" height="9" viewBox="0 0 16 9"><path d="M1 4.2 H15 M4.8 0.6 L1 4.2 L4.8 7.8 M11.2 0.6 L15 4.2 L11.2 7.8" fill="none" stroke="#9a9a9a" stroke-width="1.3"/></svg>
<div class="t" style="right:178px;top:383.84px;color:#7d7d7d;font-size:12px;text-align:right;">Factor</div>
<div style="position:absolute;left:903px;top:381px;width:129.8px;height:19.7px;background:#464646;border-radius:4px;box-shadow:0 1px 0 rgba(0,0,0,0.2);"></div>
<div class="t" style="left:817.9px;width:300px;top:384.34px;color:#8a8a8a;font-size:12px;text-align:center;">0.000</div>
<div style="position:absolute;left:1042.3px;top:387.90000000000003px;width:4.4px;height:4.4px;border-radius:50%;background:#6e6e6e"></div>
<svg style="position:absolute;left:824px;top:417.2px;" width="6.4" height="9.6" viewBox="0 0 6.4 9.6"><path d="M0.8 0.8 L5.6000000000000005 4.8 L0.8 8.799999999999999" fill="none" stroke="#c8c8c8" stroke-width="1.2"/></svg>
<div class="t" style="left:836.7px;top:417.14px;color:#e6e6e6;font-size:12px;">Normals</div>
<svg style="position:absolute;left:821.5px;top:445px;" width="9.6" height="6.3" viewBox="0 0 9.6 6.3"><path d="M0.8 0.8 L4.8 5.5 L8.799999999999999 0.8" fill="none" stroke="#c8c8c8" stroke-width="1.2"/></svg>
<div class="t" style="left:836.7px;top:442.94px;color:#e6e6e6;font-size:12px;">Materials</div>
<div style="position:absolute;left:800.4px;top:461px;width:261.4px;height:63px;background:#373737;border-radius:0px;"></div>
<div class="t" style="right:178.10000000000002px;top:473.14px;color:#e6e6e6;font-size:12px;text-align:right;">Material Offset</div>
<div style="position:absolute;left:902.8px;top:470.2px;width:129.8px;height:18.6px;background:#545454;border-radius:4px;box-shadow:0 1px 0 rgba(0,0,0,0.2);"></div>
<div class="t" style="left:817.6px;width:300px;top:473.34px;color:#e6e6e6;font-size:12px;text-align:center;">0</div>
<div style="position:absolute;left:1042.2px;top:477.09999999999997px;width:4.6px;height:4.6px;border-radius:50%;background:#ececec"></div>
<div class="t" style="right:178.10000000000002px;top:499.34px;color:#e6e6e6;font-size:12px;text-align:right;">Rim</div>
<div style="position:absolute;left:902.8px;top:496.4px;width:129.8px;height:18.6px;background:#545454;border-radius:4px;box-shadow:0 1px 0 rgba(0,0,0,0.2);"></div>
<div class="t" style="left:817.6px;width:300px;top:499.53999999999996px;color:#e6e6e6;font-size:12px;text-align:center;">0</div>
<div style="position:absolute;left:1042.2px;top:502.8px;width:4.6px;height:4.6px;border-radius:50%;background:#ececec"></div>
<svg style="position:absolute;left:824px;top:532.4px;" width="6.4" height="9.6" viewBox="0 0 6.4 9.6"><path d="M0.8 0.8 L5.6000000000000005 4.8 L0.8 8.799999999999999" fill="none" stroke="#c8c8c8" stroke-width="1.2"/></svg>
<div class="t" style="left:836.4px;top:532.24px;color:#e6e6e6;font-size:12px;">Edge Data</div>
<svg style="position:absolute;left:824px;top:558.1px;" width="6.4" height="9.6" viewBox="0 0 6.4 9.6"><path d="M0.8 0.8 L5.6000000000000005 4.8 L0.8 8.799999999999999" fill="none" stroke="#c8c8c8" stroke-width="1.2"/></svg>
<div class="t" style="left:836.4px;top:557.94px;color:#e6e6e6;font-size:12px;">Thickness Clamp</div>
<svg style="position:absolute;left:824px;top:584.3px;" width="6.4" height="9.6" viewBox="0 0 6.4 9.6"><path d="M0.8 0.8 L5.6000000000000005 4.8 L0.8 8.799999999999999" fill="none" stroke="#c8c8c8" stroke-width="1.2"/></svg>
<div class="t" style="left:836.4px;top:584.14px;color:#e6e6e6;font-size:12px;">Output Vertex Groups</div>
<div style="position:absolute;left:799.4px;top:604.4px;width:263.5px;height:60px;background:#3d3d3d;border-radius:5px;"></div>
<svg style="position:absolute;left:807.5px;top:615px;" width="9.7" height="5.7" viewBox="0 0 9.7 5.7"><path d="M0.8 0.8 L4.85 4.9 L8.899999999999999 0.8" fill="none" stroke="#c8c8c8" stroke-width="1.1"/></svg>
<svg style="position:absolute;left:822.8px;top:609.5px;" width="16" height="16" viewBox="0 0 16 16"><rect x="0.5" y="0.5" width="15" height="15" fill="none" stroke="#c8c8c8" stroke-width="1"/><circle cx="8" cy="8" r="5" fill="none" stroke="#e6e6e6" stroke-width="1.3"/></svg>
<div style="position:absolute;left:850.4px;top:608.4px;width:56.4px;height:18.3px;background:#1d1d1d;border-radius:4px 0 0 4px;box-shadow:0 1px 0 rgba(0,0,0,0.2);"></div>
<div class="t" style="left:857.6px;top:611.44px;color:#ffffff;font-size:12px;">Subdiv...</div>
<div style="position:absolute;left:906.8px;top:608.4px;width:20.3px;height:18.3px;background:#4772b3;border-radius:0px;box-shadow:0 1px 0 rgba(0,0,0,0.2);"></div>
<div style="position:absolute;left:928px;top:608.4px;width:20.1px;height:18.3px;background:#4772b3;border-radius:0px;box-shadow:0 1px 0 rgba(0,0,0,0.2);"></div>
<div style="position:absolute;left:949px;top:608.4px;width:19.9px;height:18.3px;background:#4772b3;border-radius:0px;box-shadow:0 1px 0 rgba(0,0,0,0.2);"></div>
<div style="position:absolute;left:970px;top:608.4px;width:19.9px;height:18.3px;background:#4772b3;border-radius:0px;box-shadow:0 1px 0 rgba(0,0,0,0.2);"></div>
<div style="position:absolute;left:990px;top:608.4px;width:21px;height:18.3px;background:#282828;border-radius:0 4px 4px 0;box-shadow:0 1px 0 rgba(0,0,0,0.2);"></div>
<svg style="position:absolute;left:909.8px;top:610.5px;" width="16" height="15" viewBox="0 0 16 15"><g fill="none" stroke="#ffffff" stroke-width="1"><path d="M4.2 1.7 H11.2 M2.7 3.6 L6.2 11.2 M12.7 3.6 L9.2 11.2"/><rect x="0.5" y="0.5" width="3.6" height="3.2"/><rect x="11.3" y="0.5" width="3.6" height="3.2"/><rect x="5.9" y="11.3" width="3.6" height="3.2"/></g></svg>
<svg style="position:absolute;left:930.8px;top:610.5px;" width="16" height="15" viewBox="0 0 16 15"><g fill="none" stroke="#ffffff" stroke-width="1"><path d="M4 3 H9.8 M1.9 4.7 V11.2 M4 13 H10.3 M12.2 5.1 V11.2"/><rect x="0.5" y="1.9" width="3.4" height="2.8"/><rect x="0.5" y="11.7" width="3.4" height="2.8"/><rect x="10.8" y="11.7" width="3.4" height="2.8"/></g><rect x="9.8" y="0" width="5.4" height="5.1" fill="#e0e0e0"/></svg>
<svg style="position:absolute;left:951.3px;top:611.4px;" width="15" height="13" viewBox="0 0 15 13"><rect x="0.6" y="0.6" width="13" height="9" rx="1" fill="#4772b3" stroke="#ffffff" stroke-width="1.2"/><rect x="2.2" y="2.2" width="9.8" height="5.8" fill="#ffffff"/><path d="M7.1 9.6 V11.2" stroke="#ffffff" stroke-width="1.2"/><rect x="3.2" y="11.1" width="7.8" height="1.4" rx="0.7" fill="#ffffff"/></svg>
<svg style="position:absolute;left:972.8px;top:610.8px;" width="15" height="13" viewBox="0 0 15 13"><path d="M0.2 2.2 H3.8 L4.6 0.3 C4.8 0 5 0 5.3 0 H9.3 C9.6 0 9.8 0 10 0.3 L10.8 2.2 H14.2 V12.3 H0.2 Z" fill="#ffffff"/><circle cx="7.5" cy="6.9" r="3.9" fill="none" stroke="#4772b3" stroke-width="1"/><circle cx="7.5" cy="6.9" r="1.9" fill="#4772b3"/></svg>
<svg style="position:absolute;left:995.5px;top:615px;" width="10" height="6" viewBox="0 0 10 6"><path d="M0.8 0.8 L5.0 5.2 L9.2 0.8" fill="none" stroke="#e6e6e6" stroke-width="1.3"/></svg>
<svg style="position:absolute;left:1017.8px;top:613.5px;" width="10" height="9.5" viewBox="0 0 10 9.5"><path d="M0.7 0.7 L9.3 8.8 M9.3 0.7 L0.7 8.8" stroke="#d0d0d0" stroke-width="1.2"/></svg>
<svg style="position:absolute;left:1044.5px;top:615.5px;" width="11" height="5" viewBox="0 0 11 5"><rect x="0" y="0" width="1.6" height="1.6" fill="#1c1c1c"/><rect x="0" y="3" width="1.6" height="1.6" fill="#1c1c1c"/><rect x="3" y="0" width="1.6" height="1.6" fill="#1c1c1c"/><rect x="3" y="3" width="1.6" height="1.6" fill="#1c1c1c"/><rect x="6" y="0" width="1.6" height="1.6" fill="#1c1c1c"/><rect x="6" y="3" width="1.6" height="1.6" fill="#1c1c1c"/><rect x="9" y="0" width="1.6" height="1.6" fill="#1c1c1c"/><rect x="9" y="3" width="1.6" height="1.6" fill="#1c1c1c"/></svg>
<div style="position:absolute;left:807.8px;top:639px;width:122.1px;height:20px;background:#4772b3;border-radius:4px 0 0 4px;box-shadow:0 1px 0 rgba(0,0,0,0.2);"></div>
<div style="position:absolute;left:930.1px;top:639px;width:123.6px;height:20px;background:#545454;border-radius:0 4px 4px 0;box-shadow:0 1px 0 rgba(0,0,0,0.2);"></div>
<div class="t" style="left:718.9px;width:300px;top:641.84px;color:#ffffff;font-size:12px;text-align:center;">Catmull-Clark</div>
<div class="t" style="left:841.9px;width:300px;top:641.84px;color:#e6e6e6;font-size:12px;text-align:center;">Simple</div>
<svg style="position:absolute;left:0;top:0" width="1071" height="650" viewBox="0 0 1071 650"><line x1="611.8" y1="266.5" x2="868.2" y2="193.0" stroke="#00ff00" stroke-width="12.4" stroke-linecap="round"/><polygon points="922.3,177.4 860.2,177.0 870.1,210.8" fill="#00ff00"/></svg>

</body></html>
